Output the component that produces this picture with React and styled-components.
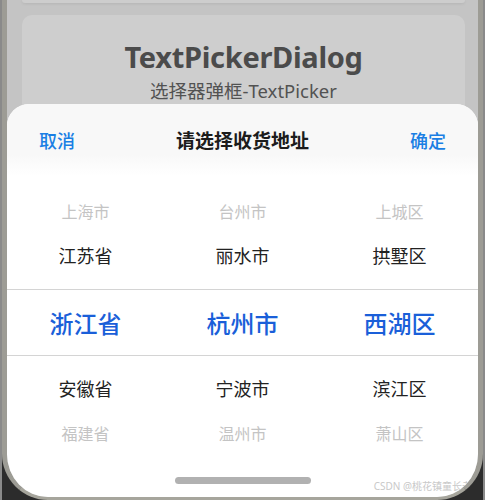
import React from 'react';
import styled, { createGlobalStyle } from 'styled-components';

const GlobalStyle = createGlobalStyle`
  html, body {
    margin: 0;
    padding: 0;
    width: 485px;
    height: 500px;
    overflow: hidden;
    background: #d8d8d8;
  }
  body {
    font-family: "Noto Sans", "Noto Sans CJK SC", sans-serif;
  }
`;

const rows = [
  { kind: 'far', height: 44, items: ['上海市', '台州市', '上城区'] },
  { kind: 'near', height: 44, items: ['江苏省', '丽水市', '拱墅区'] },
  { kind: 'gap', height: 12 },
  { kind: 'selected', height: 67, items: ['浙江省', '杭州市', '西湖区'] },
  { kind: 'gap', height: 10 },
  { kind: 'near', height: 44, items: ['安徽省', '宁波市', '滨江区'] },
  { kind: 'far', height: 46, items: ['福建省', '温州市', '萧山区'] },
];

const App = () => {
  return (
    <>
      <GlobalStyle />
      <Frame>
        <Screen>
          <Page>
            <PrevCard />
            <Card>
              <Title>TextPickerDialog</Title>
              <Subtitle>选择器弹框-TextPicker</Subtitle>
            </Card>
          </Page>
          <Dialog>
            <Header>
              <Action>取消</Action>
              <HeaderTitle>请选择收货地址</HeaderTitle>
              <Action>确定</Action>
            </Header>
            <Picker>
              {rows.map((row, i) =>
                row.kind === 'gap' ? (
                  <Gap key={i} $h={row.height} />
                ) : (
                  <Row key={i} $h={row.height} $selected={row.kind === 'selected'}>
                    {row.items.map((t) => (
                      <Cell key={t} $kind={row.kind}>
                        {t}
                      </Cell>
                    ))}
                  </Row>
                )
              )}
            </Picker>
            <HomeBar />
            <Watermark>CSDN @桃花镇童长老</Watermark>
          </Dialog>
        </Screen>
      </Frame>
    </>
  );
};

export default App;

const Frame = styled.div`
  width: 485px;
  height: 500px;
  box-sizing: border-box;
  padding: 0 2px;
  background: linear-gradient(to right, #8a8a8a 0, #8a8a8a 2px, #2c2c2c 2px, #2c2c2c 483px, #8a8a8a 483px);
`;

const Screen = styled.div`
  position: relative;
  height: 500px;
  box-sizing: border-box;
  border-left: 5px solid #9d9c95;
  border-right: 5px solid #9d9c95;
  border-bottom: 3px solid #a6a59c;
  border-radius: 0 0 46px 46px;
  overflow: hidden;
  background: #c4c4c4;
`;

const Page = styled.div`
  display: flex;
  flex-direction: column;
  align-items: stretch;
  padding: 0 13px 0 15px;
`;

const PrevCard = styled.div`
  height: 3px;
  background: #cdcdcd;
  border-radius: 0 0 8px 8px;
  box-shadow: 0 1px 3px rgba(0, 0, 0, 0.08);
`;

const Card = styled.div`
  margin-top: 12px;
  height: 200px;
  background: #cecece;
  border-radius: 10px;
  display: flex;
  flex-direction: column;
  align-items: center;
  padding-top: 22px;
  box-sizing: border-box;
`;

const Title = styled.div`
  font-size: 29px;
  font-weight: 700;
  color: #4b4b4b;
  line-height: 40px;
  letter-spacing: -0.3px;
`;

const Subtitle = styled.div`
  font-size: 18.5px;
  color: #525252;
  line-height: 24px;
  margin-top: 2px;
`;

const Dialog = styled.div`
  position: absolute;
  left: 0;
  right: 0;
  top: 104px;
  bottom: 0;
  background: #ffffff;
  border-radius: 22px 22px 0 0;
  display: flex;
  flex-direction: column;
`;

const Header = styled.div`
  height: 72px;
  display: flex;
  align-items: center;
  justify-content: space-between;
  padding: 0 32px 0 32px;
  border-radius: 22px 22px 0 0;
  background: linear-gradient(to bottom, #f8f8f8 0, #f8f8f8 70%, #ffffff 100%);
  margin-bottom: 13px;
`;

const Action = styled.div`
  font-size: 18px;
  color: #1a7fe4;
  font-weight: 500;
`;

const HeaderTitle = styled.div`
  font-size: 19px;
  font-weight: 700;
  color: #1c1c1c;
`;

const Picker = styled.div`
  display: flex;
  flex-direction: column;
`;

const Gap = styled.div`
  height: ${(p) => p.$h}px;
`;

const Row = styled.div`
  height: ${(p) => p.$h}px;
  display: grid;
  grid-template-columns: 1fr 1fr 1fr;
  align-items: center;
  ${(p) =>
    p.$selected &&
    `
    border-top: 1px solid #d4d4d4;
    border-bottom: 1px solid #d4d4d4;
    box-sizing: border-box;
  `}
`;

const Cell = styled.div`
  text-align: center;
  font-size: ${(p) => (p.$kind === 'selected' ? 24 : p.$kind === 'near' ? 18 : 16)}px;
  font-weight: ${(p) => (p.$kind === 'selected' ? 500 : 400)};
  color: ${(p) => (p.$kind === 'selected' ? '#1a5fd9' : p.$kind === 'near' ? '#222222' : '#c4c4c4')};
`;

const HomeBar = styled.div`
  position: absolute;
  left: 168px;
  bottom: 13px;
  width: 136px;
  height: 7px;
  border-radius: 4px;
  background: #b1b1b1;
`;

const Watermark = styled.div`
  position: absolute;
  right: 6px;
  bottom: 4px;
  font-size: 10px;
  color: #c9c9c9;
  font-family: "Noto Sans", "Noto Sans CJK SC", sans-serif;
`;
